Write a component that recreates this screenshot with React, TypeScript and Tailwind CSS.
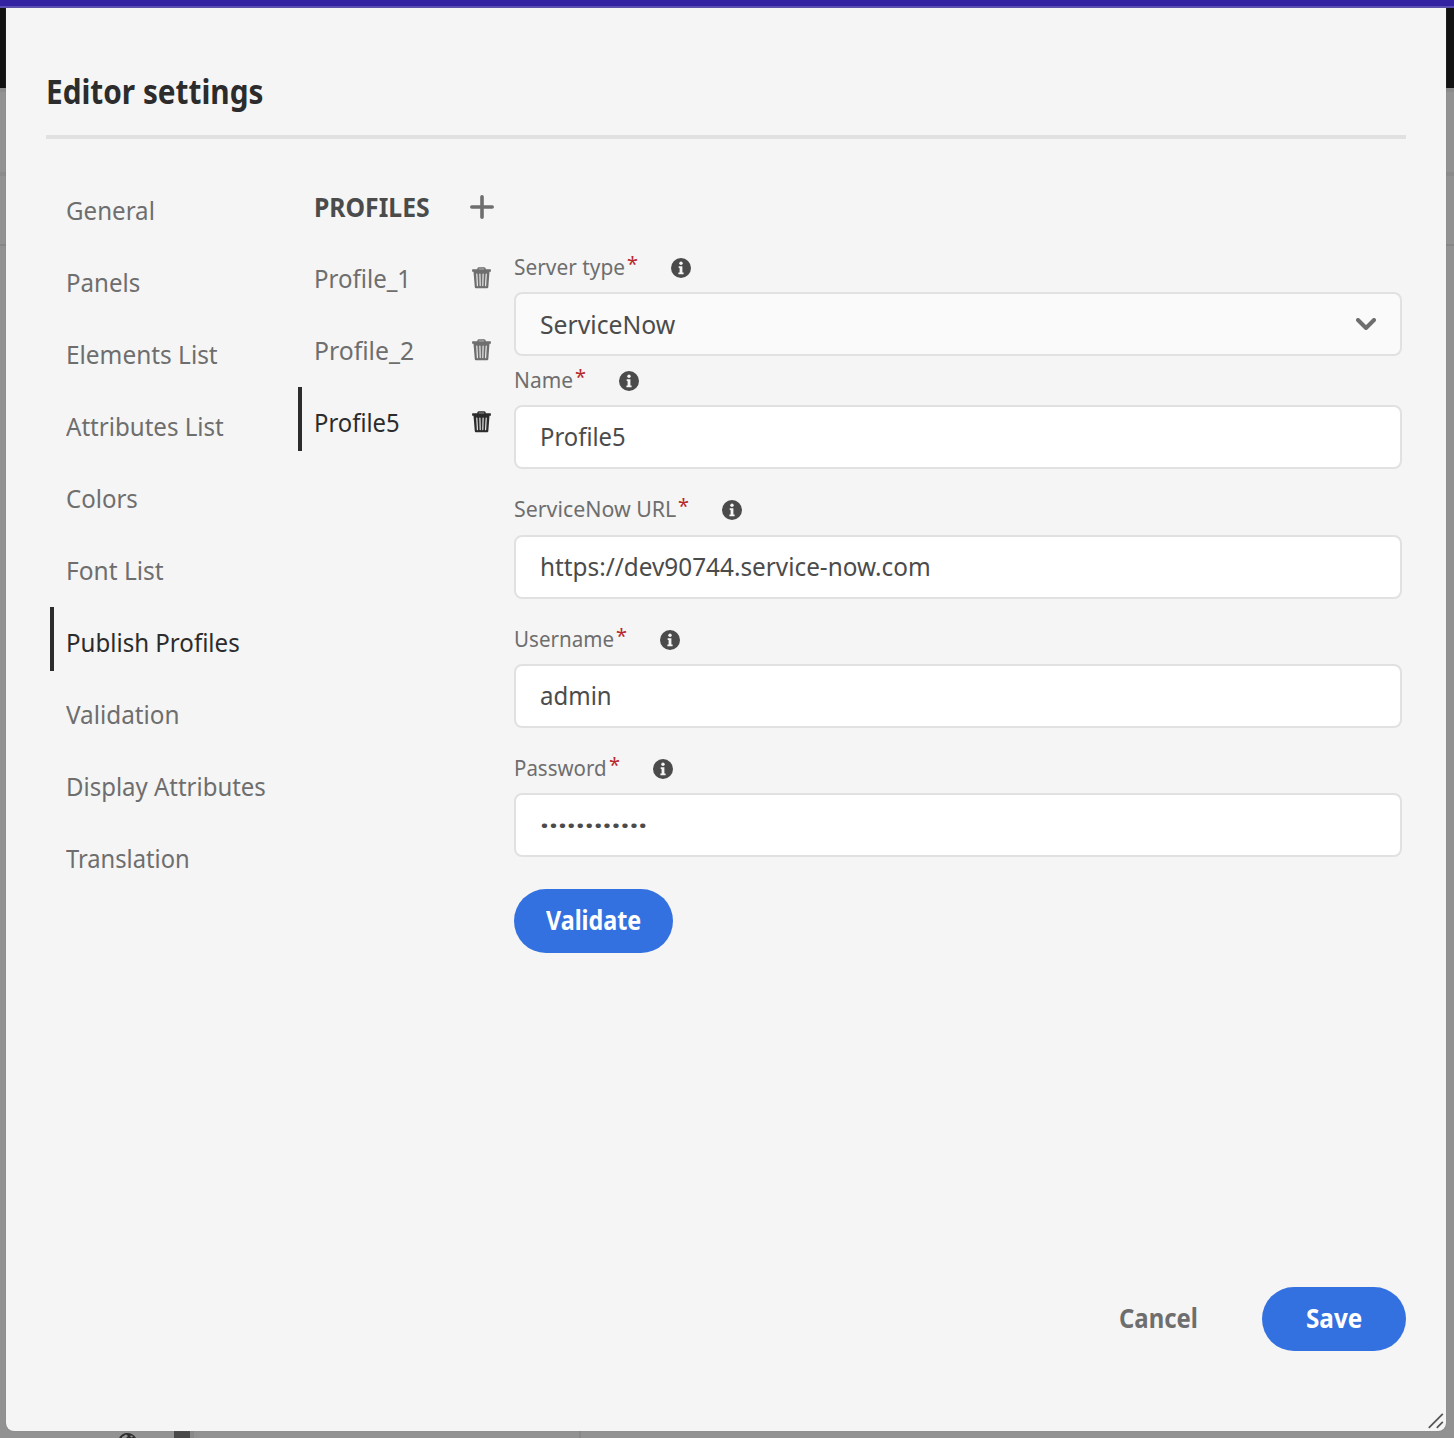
import { useLayoutEffect, useRef, useState } from "react";

type FitProps = { text: string; w: number; className?: string };

/* Text squeezed horizontally to a fixed advance width. */
function Fit({ text, w, className = "" }: FitProps) {
  const ref = useRef<HTMLSpanElement>(null);
  const [scale, setScale] = useState(1);
  useLayoutEffect(() => {
    if (ref.current) setScale(w / ref.current.offsetWidth);
  }, [w, text]);
  return (
    <span className={`block whitespace-nowrap ${className}`} style={{ width: w }}>
      <span ref={ref} className="inline-block origin-left" style={{ transform: `scaleX(${scale})` }}>
        {text}
      </span>
    </span>
  );
}

function Trash() {
  return (
    <svg width="20" height="22" viewBox="0 0 20 22" className="-mr-1 shrink-0">
      <path d="M6 3V1.8Q6 1 6.8 1h5.4q.8 0 .8 .8V3" strokeWidth="1.5" fill="none" stroke="currentColor" />
      <path d="M.6 2.2h17.8q.5 0 .5.5v1.6q0 .5-.5.5h-.9l-1.2 15.5q-.1 1-1 1H3.8q-.9 0-1-1L1.5 4.8H.6q-.5 0-.5-.5V2.7q0-.5.5-.5z" fill="currentColor" />
      <path d="M4.8 7l.6 11.6M7.9 7l.3 11.6M11.1 7l-.3 11.6M14.2 7l-.6 11.6" stroke="#f5f5f5" strokeWidth="1.1" strokeLinecap="round" />
    </svg>
  );
}

function Info() {
  return (
    <svg width="20" height="20" viewBox="0 0 20 20" className="shrink-0">
      <circle cx="10" cy="10" r="10" fill="#4b4b4b" />
      <circle cx="10" cy="5.2" r="1.7" fill="#f5f5f5" />
      <path d="M7.7 8.2h3.7v6.2h1.2v1.9H7.4v-1.9h1.2V10h-.9z" fill="#f5f5f5" />
    </svg>
  );
}

const nav: [string, number][] = [
  ["General", 89],
  ["Panels", 74],
  ["Elements List", 152],
  ["Attributes List", 157.5],
  ["Colors", 72],
  ["Font List", 98],
  ["Publish Profiles", 174],
  ["Validation", 114],
  ["Display Attributes", 200],
  ["Translation", 124],
];

const profiles: [string, number][] = [
  ["Profile_1", 97],
  ["Profile_2", 100],
  ["Profile5", 86],
];

function FieldLabel({ text, w }: FitProps) {
  return (
    <div className="-mt-px mb-px flex h-8 items-center text-[22px] leading-8 text-[#6e6e6e]">
      <Fit text={text} w={w} />
      <span className="-mt-1 ml-0.5 w-[11px] text-[20px] leading-8 text-[#b8272c]">*</span>
      <span className="ml-[33px] mt-[3px]">
        <Info />
      </span>
    </div>
  );
}

const inputBox = "flex h-16 items-center rounded-lg border-2 border-[#e1e1e1] px-6 text-[26px] leading-8 text-[#4b4b4b]";

export default function App() {
  return (
    <div className="relative h-[1438px] w-[1454px] overflow-hidden bg-[#929292] font-['Noto_Sans',sans-serif]">
      <div className="h-1.5 bg-[#3323a2]" />
      <div className="h-0.5 bg-[#5b4eb3]" />
      <div className="h-20 bg-[#121212]" />
      <div className="h-1 bg-[#8b8b8b]" />
      <div className="mt-20 h-1 bg-[#8b8b8b]" />
      <div className="mt-[68px] h-0.5 bg-[#868686]" />
      <div className="mt-[1184px] flex h-2">
        <svg width="20" height="8" viewBox="0 0 20 8" className="ml-[118px]">
          <path d="M1 8Q4 3 9 3q6 0 9 5z" fill="#2f2f2f" />
          <path d="M4 7l4-2.5 2 1.5-2 2H4zM12 6l2-.6 1 1.6-2 .5z" fill="#929292" />
        </svg>
        <div className="ml-9 w-4 bg-[#494949]" />
        <div className="w-1 bg-[#898989]" />
        <div className="ml-[385px] w-0.5 bg-[#888888]" />
      </div>

      <div className="absolute left-1.5 top-2 flex h-[1423px] w-[1440px] flex-col rounded-b-lg bg-[#f5f5f5] px-10 shadow-[0_0_1px_#777]">
        <h1 className="mt-[59px] box-content flex h-[68px] items-start border-b-4 border-[#e1e1e1] text-[34px] font-bold leading-[48px] text-[#2c2c2c]">
          <Fit text="Editor settings" w={217} />
        </h1>

        <div className="mt-9 flex text-[26px] leading-8">
          <nav className="flex w-[248px] flex-col gap-2 pl-1">
            {nav.map(([label, w]) => (
              <div
                key={label}
                className={`flex h-16 items-center border-l-4 pl-3 pt-1.5 ${
                  label === "Publish Profiles" ? "border-[#2c2c2c] text-[#2c2c2c]" : "border-transparent text-[#6e6e6e]"
                }`}
              >
                <Fit text={label} w={w} />
              </div>
            ))}
          </nav>

          <div className="flex w-[220px] flex-col gap-2 pl-1">
            <div className="-mb-1 flex h-16 items-center justify-between pl-4 pr-5 font-bold text-[#4b4b4b]">
              <Fit text="PROFILES" w={116} />
              <svg width="24" height="24" viewBox="0 0 24 24" fill="none" stroke="#6e6e6e" strokeWidth="3.6" strokeLinecap="round">
                <path d="M12 1.8v20.4M1.8 12h20.4" />
              </svg>
            </div>
            {profiles.map(([label, w]) => (
              <div
                key={label}
                className={`flex h-16 items-center justify-between border-l-4 pl-3 pr-[26px] ${
                  label === "Profile5" ? "border-[#2c2c2c] text-[#2c2c2c]" : "border-transparent text-[#6e6e6e]"
                }`}
              >
                <Fit text={label} w={w} className="pt-1.5" />
                <span className="pt-1.5">
                  <Trash />
                </span>
              </div>
            ))}
          </div>

          <div className="mt-[76px] flex w-[888px] flex-col">
            <FieldLabel text="Server type" w={111} />
            <div className={`${inputBox} mt-[9px] justify-between bg-[#fafafa]`}>
              <Fit text="ServiceNow" w={135} />
              <svg width="20" height="12" viewBox="0 0 20 12" fill="none" stroke="#6e6e6e" strokeWidth="4" strokeLinecap="round" strokeLinejoin="round">
                <path d="M2 2l8 8 8-8" />
              </svg>
            </div>
            <div className="mt-2">
              <FieldLabel text="Name" w={59} />
            </div>
            <div className={`${inputBox} mt-[9px] bg-white pb-0.5`}>
              <Fit text="Profile5" w={86} />
            </div>
            <div className="mt-6">
              <FieldLabel text="ServiceNow URL" w={162} />
            </div>
            <div className={`${inputBox} mt-[10px] bg-white pb-[3px]`}>
              <Fit text="https://dev90744.service-now.com" w={391} />
            </div>
            <div className="mt-6">
              <FieldLabel text="Username" w={100} />
            </div>
            <div className={`${inputBox} mt-[9px] bg-white pb-[3px]`}>
              <Fit text="admin" w={72} />
            </div>
            <div className="mt-6">
              <FieldLabel text="Password" w={93} />
            </div>
            <div className={`${inputBox} mt-[9px] bg-white`}>
              <Fit text="••••••••••••" w={107} className="text-[18px]" />
            </div>
            <button className="mt-8 flex h-16 w-[159px] items-center justify-center rounded-full bg-[#3471e0] pb-0.5 font-bold text-white">
              <Fit text="Validate" w={95} />
            </button>
          </div>
        </div>

        <div className="mb-20 mt-auto flex items-center justify-end gap-16 text-[26px] font-bold leading-8">
          <button className="pb-0.5 text-[#6e6e6e]">
            <Fit text="Cancel" w={79} />
          </button>
          <button className="flex h-16 w-36 items-center justify-center rounded-full bg-[#3471e0] pb-0.5 text-white">
            <Fit text="Save" w={56} />
          </button>
        </div>

        <svg width="16" height="16" viewBox="0 0 16 16" className="absolute bottom-0.5 right-0.5" stroke="#555" strokeWidth="1.8">
          <path d="M.8 14.8L14.8.8M8.8 14.8l6-6" />
        </svg>
      </div>
    </div>
  );
}
